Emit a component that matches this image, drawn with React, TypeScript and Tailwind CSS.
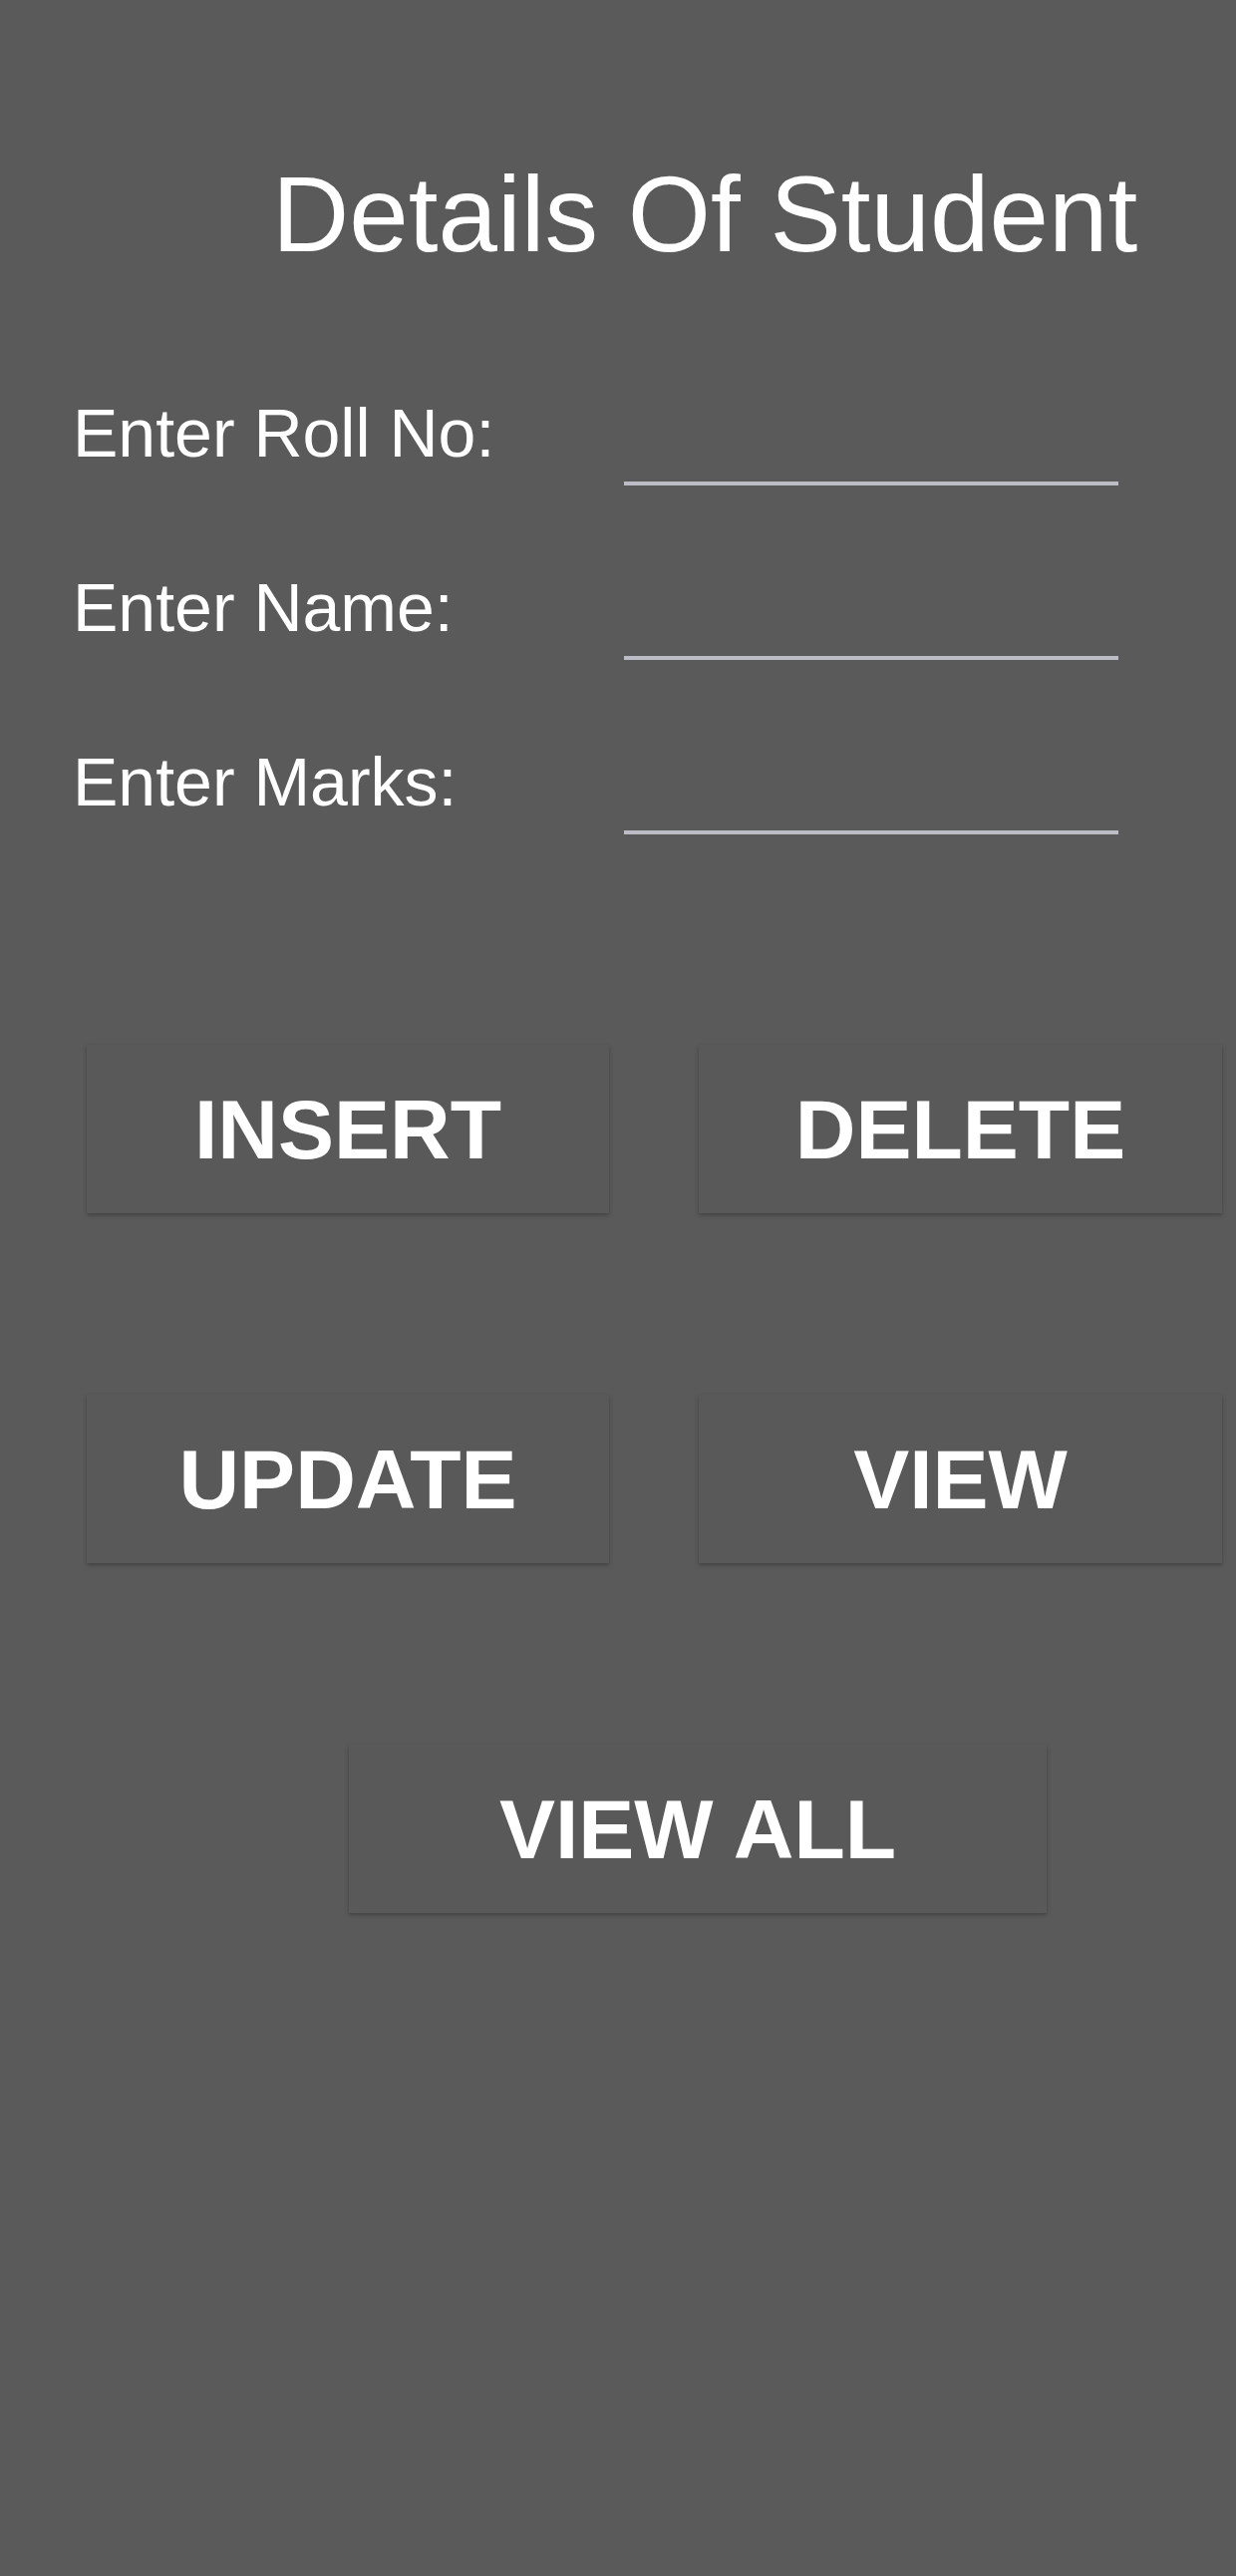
const fields = ["Enter Roll No:", "Enter Name:", "Enter Marks:"];

const Btn = ({label, w}: {label: string; w: string}) => (
  <button
    className={`${w} h-[169px] bg-[#595959] text-white text-[84px] font-bold leading-none shadow-[0_2px_4px_rgba(0,0,0,0.28)] flex items-center justify-center`}
  >
    {label}
  </button>
);

export default function App() {
  return (
    <div
      className="w-full min-h-[2584px] bg-[#5a5a5a] text-white"
      style={{fontFamily: '"Liberation Sans", Arial, sans-serif'}}
    >
      <h1 className="pl-[273px] pt-[162px] text-[107px] leading-none font-normal">
        Details Of Student
      </h1>

      <div className="mt-[131px] pl-[73px]">
        {fields.map((f) => (
          <div key={f} className="flex items-start h-[175px]">
            <label className="w-[553px] text-[68px] leading-none">{f}</label>
            <input
              type="text"
              className="w-[496px] h-[87px] bg-transparent border-b-4 border-[#bcbcc4] outline-none text-[60px]"
            />
          </div>
        ))}
      </div>

      <div className="mt-[123px] flex flex-col gap-[182px]">
        <div className="flex pl-[87px] gap-[90px]">
          <Btn label="INSERT" w="w-[524px]" />
          <Btn label="DELETE" w="w-[525px]" />
        </div>
        <div className="flex pl-[87px] gap-[90px]">
          <Btn label="UPDATE" w="w-[524px]" />
          <Btn label="VIEW" w="w-[525px]" />
        </div>
        <div className="flex pl-[350px]">
          <Btn label="VIEW ALL" w="w-[700px]" />
        </div>
      </div>
    </div>
  );
}
